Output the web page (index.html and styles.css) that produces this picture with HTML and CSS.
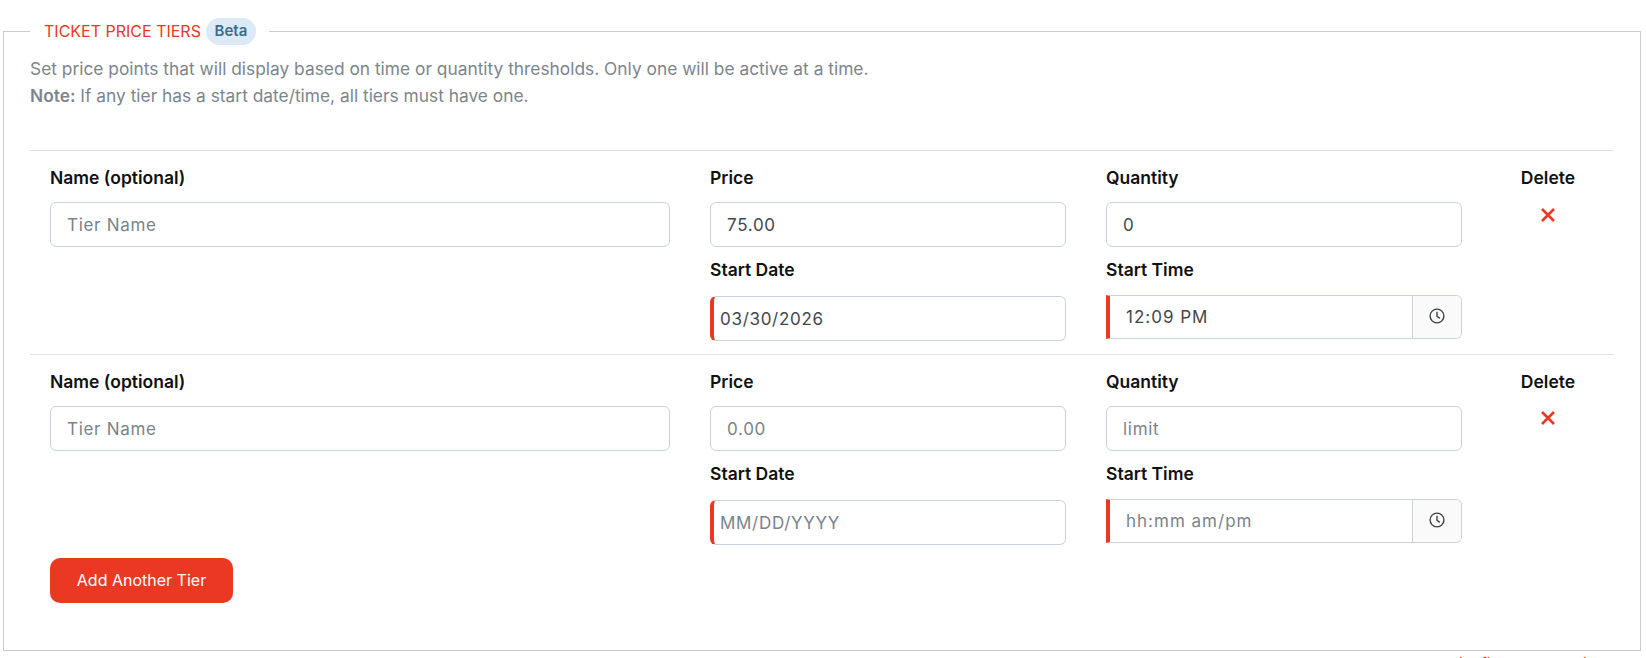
FILE: index.html
```html
<!DOCTYPE html>
<html lang="en">
<head>
<meta charset="utf-8">
<title>Ticket Price Tiers</title>
<link rel="stylesheet" href="styles.css">
</head>
<body>
<fieldset class="panel">
  <legend class="panel-legend">TICKET PRICE TIERS <span class="badge">Beta</span></legend>
  <p class="intro">Set price points that will display based on time or quantity thresholds. Only one will be active at a time.<br><strong>Note:</strong> If any tier has a start date/time, all tiers must have one.</p>

  <div class="tier">
    <div class="field">
      <label class="label">Name (optional)</label>
      <input class="input" type="text" placeholder="Tier Name">
    </div>
    <div class="field">
      <label class="label">Price</label>
      <input class="input" type="text" value="75.00">
    </div>
    <div class="field">
      <label class="label">Quantity</label>
      <input class="input" type="text" value="0">
    </div>
    <div class="field delete">
      <span class="label">Delete</span>
      <svg class="x" width="16" height="16" viewBox="0 0 16 16"><path d="M2 2 L14 14 M14 2 L2 14"/></svg>
    </div>
    <div class="field col-2">
      <label class="label second">Start Date</label>
      <input class="input date" type="text" value="03/30/2026">
    </div>
    <div class="field col-3">
      <label class="label second">Start Time</label>
      <div class="time">
        <input class="time-input" type="text" value="12:09 PM">
        <span class="addon"><svg width="16" height="16" viewBox="0 0 16 16"><circle cx="8" cy="8" r="6.9"/><path d="M8 3.8 V8.2 L10.8 10.4"/></svg></span>
      </div>
    </div>
  </div>

  <div class="tier">
    <div class="field">
      <label class="label">Name (optional)</label>
      <input class="input" type="text" placeholder="Tier Name">
    </div>
    <div class="field">
      <label class="label">Price</label>
      <input class="input" type="text" placeholder="0.00">
    </div>
    <div class="field">
      <label class="label">Quantity</label>
      <input class="input" type="text" placeholder="limit">
    </div>
    <div class="field delete">
      <span class="label">Delete</span>
      <svg class="x lower" width="16" height="16" viewBox="0 0 16 16"><path d="M2 2 L14 14 M14 2 L2 14"/></svg>
    </div>
    <div class="field col-2">
      <label class="label second">Start Date</label>
      <input class="input date" type="text" placeholder="MM/DD/YYYY">
    </div>
    <div class="field col-3">
      <label class="label second">Start Time</label>
      <div class="time">
        <input class="time-input" type="text" placeholder="hh:mm am/pm">
        <span class="addon"><svg width="16" height="16" viewBox="0 0 16 16"><circle cx="8" cy="8" r="6.9"/><path d="M8 3.8 V8.2 L10.8 10.4"/></svg></span>
      </div>
    </div>
  </div>

  <button class="add" type="button">Add Another Tier</button>
</fieldset>
<p class="footnote">Note: All tier fields are required</p>
</body>
</html>
```
FILE: styles.css
```css
* { box-sizing: border-box; }
html, body { height: 658px; overflow: hidden; }
body {
  margin: 0;
  padding: 18px 5px 0 3px;
  background: #fff;
  font-family: Inter, "Liberation Sans", sans-serif;
  font-size: 16px;
  color: #111;
}
.panel {
  margin: 0;
  padding: 0 26px 47px 26px;
  height: 633px;
  border: 1px solid #ccc;
  min-width: 0;
}
.panel-legend {
  margin-left: 0;
  padding: 0 13px 0 14px;
  height: 27px;
  line-height: 25px;
  font-size: 16px;
  color: #eb3823;
  display: flex;
  align-items: center;
  gap: 5px;
}
.badge {
  display: inline-block;
  height: 27px;
  width: 50px;
  text-align: center;
  line-height: 26px;
  border-radius: 14px;
  background: #dbeaf5;
  color: #3d6c8e;
  font-size: 15px;
  font-weight: 600;
}
.intro {
  margin: 10px 0 0;
  height: 95px;
  line-height: 27px;
  color: #7d858c;
  font-size: 17.35px;
}
.intro strong { font-weight: 600; }
.tier {
  border-top: 1px solid #dee2e6;
  height: 204px;
  padding: 15px 20px 0;
  display: grid;
  grid-template-columns: 620px 356px 356px 1fr;
  grid-template-rows: 93px 1fr;
  column-gap: 40px;
}
.field { display: flex; flex-direction: column; }
.col-2 { grid-column: 2; grid-row: 2; }
.col-3 { grid-column: 3; grid-row: 2; }
.label {
  display: block;
  height: 36px;
  line-height: 23px;
  font-size: 17.5px;
  font-weight: 600;
  color: #111;
}
.second { height: 37px; line-height: 22px; }
.delete { align-items: center; }
.x { margin-top: 5px; }
.x.lower { margin-top: 4px; }
.x path { stroke: #eb3823; stroke-width: 2.6; fill: none; }
.input {
  width: 100%;
  height: 45px;
  padding: 0 16px;
  border: 1px solid #c9d3df;
  border-radius: 6px;
  background: #fff;
  font-family: Inter, sans-serif;
  font-size: 17px;
  letter-spacing: .7px;
  color: #43484d;
  outline: none;
}
.input::placeholder, .time-input::placeholder { color: #7a838b; opacity: 1; }
.date {
  padding-left: 6px;
  border-left: 4px solid #eb3823;
}
.time {
  display: flex;
  height: 44px;
  margin-top: -1px;
  border: 1px solid #c9d3df;
  border-left: 4px solid #eb3823;
  border-radius: 0 6px 6px 0;
  overflow: hidden;
}
.time-input {
  flex: 1;
  min-width: 0;
  border: 0;
  padding: 0 16px;
  font-family: Inter, sans-serif;
  font-size: 17px;
  letter-spacing: 1px;
  color: #43484d;
  outline: none;
}
.addon {
  width: 49px;
  display: flex;
  align-items: center;
  justify-content: center;
  background: #fafafa;
  border-left: 1px solid #c9d3df;
}
.addon svg { margin-top: -2px; }
.addon circle, .addon path { fill: none; stroke: #3a3f44; stroke-width: 1.4; }
.add {
  display: block;
  width: 183px;
  height: 45px;
  padding: 0 0 2px;
  border: 0;
  border-radius: 10px;
  background: #eb3823;
  color: #fff;
  font-family: Inter, sans-serif;
  font-size: 16px;
  margin-left: 20px;
}
.footnote {
  margin: 0;
  text-align: right;
  padding: 5px 31px 0 0;
  color: #eb3823;
  font-size: 15px;
  line-height: 16px;
}
```
